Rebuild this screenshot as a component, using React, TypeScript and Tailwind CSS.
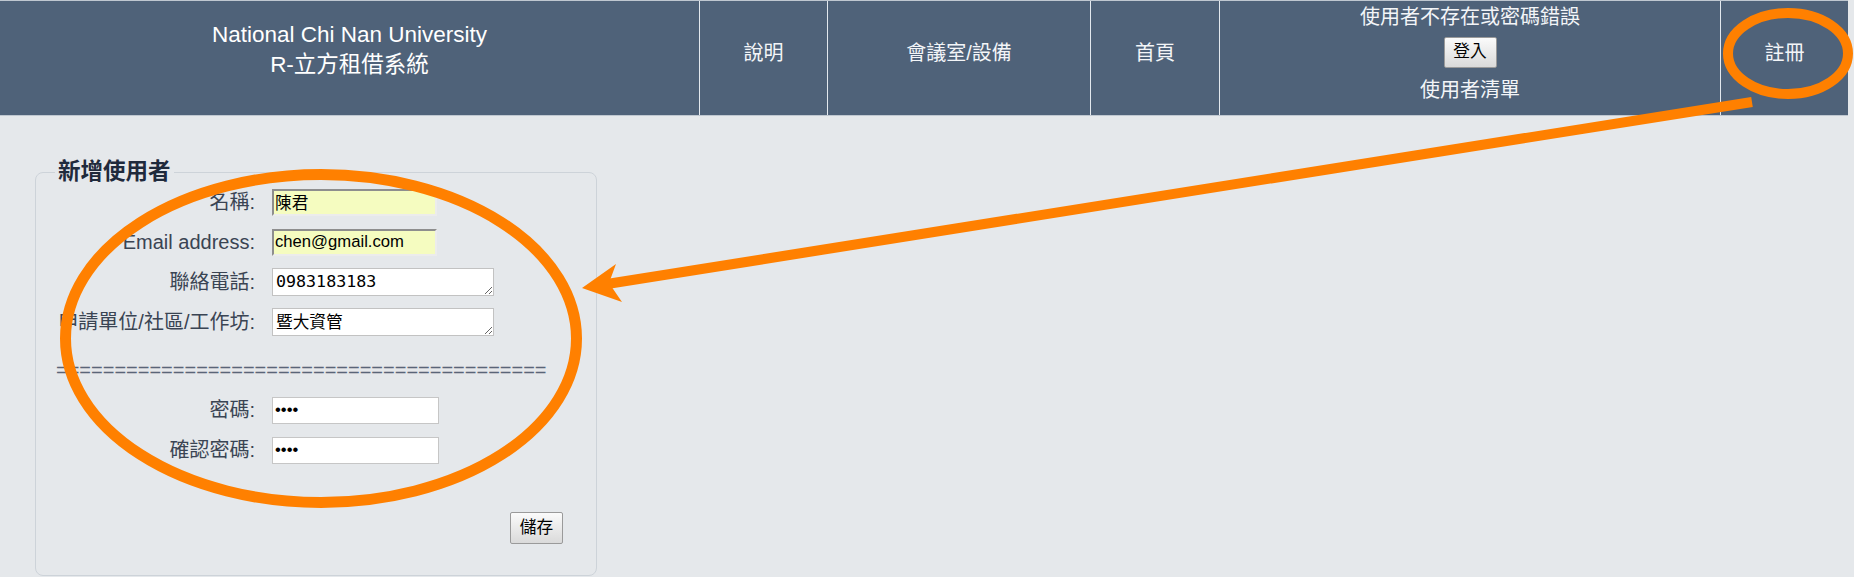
import React from "react";

const sans = "font-['Liberation_Sans','Noto_Sans_CJK_TC',sans-serif]";

const NavCell: React.FC<{ w: string; label: string }> = ({ w, label }) => (
  <div className={`${w} h-full border-l border-[#e3e8ee] flex items-center justify-center pb-[10px] text-[20px] leading-[24px] text-[#f3f5f8]`}>
    {label}
  </div>
);

const Row: React.FC<{ label: string; children: React.ReactNode }> = ({ label, children }) => (
  <div className="flex items-center h-[40px]">
    <div className="w-[219px] text-right text-[20px] leading-[24px] text-[#3a4453] whitespace-nowrap">{label}</div>
    <div className="ml-[17px] flex items-center">{children}</div>
  </div>
);

const yellowInput =
  "w-[165px] h-[27px] bg-[#f5fcc0] border-2 border-t-[#8e8e8e] border-l-[#8e8e8e] border-r-[#ececec] border-b-[#ececec] px-[1px] text-[16.67px] text-black outline-none font-['Liberation_Sans','Noto_Sans_CJK_TC',sans-serif]";

const pwInput =
  "w-[167px] h-[27px] bg-white border border-[#c6c6c6] px-[2px] text-[16.67px] text-black outline-none font-['Liberation_Sans',sans-serif]";

const App: React.FC = () => {
  return (
    <div className={`relative w-full min-h-[577px] bg-[#e5e8eb] overflow-hidden ${sans}`}>
      {/* header */}
      <div className="flex w-[1848px] h-[116px] bg-[#4f6279] border-t border-b border-[#bfc7d0]">
        <div className="w-[699px] h-full flex flex-col items-center pt-[19px] text-[22.5px] leading-[30px] text-white">
          <span>National Chi Nan University</span>
          <span>R-立方租借系統</span>
        </div>
        <NavCell w="w-[128px]" label="說明" />
        <NavCell w="w-[263px]" label="會議室/設備" />
        <NavCell w="w-[129px]" label="首頁" />
        <div className="w-[501px] h-full border-l border-[#e3e8ee] flex flex-col items-center pt-[4px] text-[20px] leading-[24px] text-[#f3f5f8]">
          <span>使用者不存在或密碼錯誤</span>
          <button className="mt-[8px] w-[53px] h-[31px] bg-gradient-to-b from-[#fbfbfb] to-[#dadada] border border-[#9a9a9a] rounded-[2px] text-[16.67px] leading-none text-black">
            登入
          </button>
          <span className="mt-[10px]">使用者清單</span>
        </div>
        <NavCell w="w-[128px]" label="註冊" />
      </div>

      {/* form */}
      <fieldset className="ml-[35px] mt-[46px] w-[562px] h-[414px] border border-[#cdd3d9] rounded-[8px]">
        <legend className="ml-[19px] px-[3px] text-[22.5px] leading-[20px] font-bold text-[#1f2a3c]">新增使用者</legend>
        <Row label="名稱:">
          <input className={yellowInput} defaultValue="陳君" />
        </Row>
        <Row label="Email address:">
          <input className={yellowInput} defaultValue="chen@gmail.com" />
        </Row>
        <Row label="聯絡電話:">
          <textarea
            rows={1}
            className="w-[222px] h-[28px] bg-white border border-[#c2c2c2] px-[3px] py-0 text-[16.67px] leading-[26px] text-black outline-none overflow-hidden font-['DejaVu_Sans_Mono','Noto_Sans_CJK_TC',monospace]"
            defaultValue="0983183183"
          />
        </Row>
        <Row label="申請單位/社區/工作坊:">
          <textarea
            rows={1}
            className="w-[222px] h-[28px] bg-white border border-[#c2c2c2] px-[3px] py-0 text-[16.67px] leading-[28px] text-black outline-none overflow-y-scroll font-['DejaVu_Sans_Mono','Noto_Sans_CJK_TC',monospace]"
            defaultValue="暨大資管"
          />
        </Row>
        <div className="mt-[16px] mb-[8px] ml-[20px] text-[20px] leading-[24px] text-[#5a6578] whitespace-nowrap">
          ==========================================
        </div>
        <Row label="密碼:">
          <input type="password" className={pwInput} defaultValue="1234" />
        </Row>
        <Row label="確認密碼:">
          <input type="password" className={pwInput} defaultValue="1234" />
        </Row>
        <div className="flex justify-end pr-[33px] mt-[42px]">
          <button className="w-[53px] h-[32px] bg-gradient-to-b from-[#fbfbfb] to-[#dadada] border border-[#9a9a9a] rounded-[2px] text-[16.67px] leading-none text-black">
            儲存
          </button>
        </div>
      </fieldset>

      {/* orange annotations */}
      <svg className="absolute left-0 top-0 pointer-events-none" width="1854" height="577" viewBox="0 0 1854 577">
        <ellipse cx="321" cy="338.5" rx="255.5" ry="164" fill="none" stroke="#ff8000" strokeWidth="11" />
        <ellipse cx="1788" cy="53.5" rx="60" ry="40.5" fill="none" stroke="#ff8000" strokeWidth="10" />
        <line x1="604" y1="284.5" x2="1752" y2="102" stroke="#ff8000" strokeWidth="10" />
        <polygon points="582,288 616,264 609,283 622,302" fill="#ff8000" />
      </svg>
    </div>
  );
};

export default App;
